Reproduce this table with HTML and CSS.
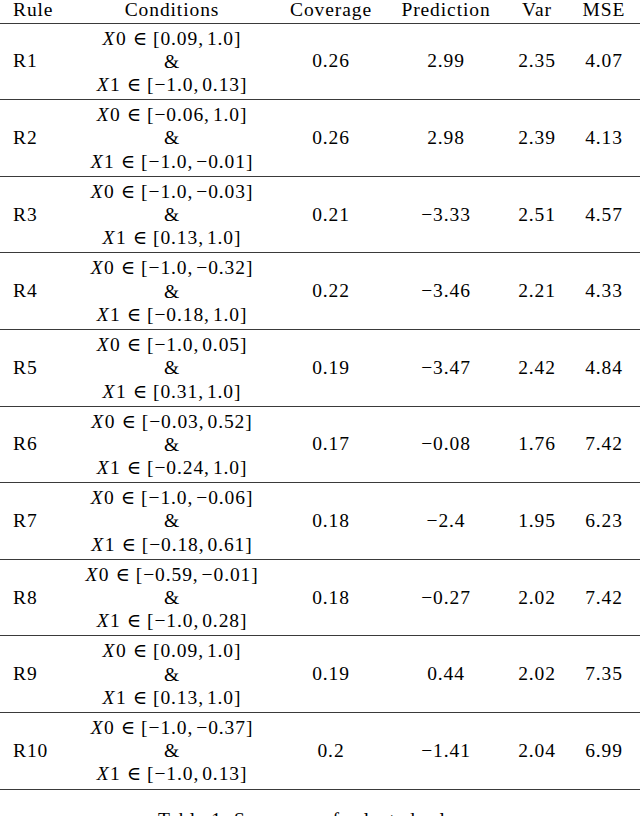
FILE: index.html
```html
<!DOCTYPE html>
<html>
<head>
<meta charset="utf-8">
<link rel="stylesheet" href="styles.css">
</head>
<body>
<table class="rules">
  <colgroup>
    <col class="c-rule"><col class="c-cond"><col class="c-cov"><col class="c-pred"><col class="c-var"><col class="c-mse">
  </colgroup>
  <thead>
    <tr><th class="rule">Rule</th><th>Conditions</th><th>Coverage</th><th>Prediction</th><th>Var</th><th>MSE</th></tr>
  </thead>
  <tbody>
    <tr><td class="rule">R1</td><td class="cond"><div class="ln"><i>X</i>0<span class="rel">∈</span>[0.09,<span class="sp"></span>1.0]</div><div class="ln">&amp;</div><div class="ln"><i>X</i>1<span class="rel">∈</span>[−1.0,<span class="sp"></span>0.13]</div></td><td>0.26</td><td>2.99</td><td>2.35</td><td>4.07</td></tr>
    <tr><td class="rule">R2</td><td class="cond"><div class="ln"><i>X</i>0<span class="rel">∈</span>[−0.06,<span class="sp"></span>1.0]</div><div class="ln">&amp;</div><div class="ln"><i>X</i>1<span class="rel">∈</span>[−1.0,<span class="sp"></span>−0.01]</div></td><td>0.26</td><td>2.98</td><td>2.39</td><td>4.13</td></tr>
    <tr><td class="rule">R3</td><td class="cond"><div class="ln"><i>X</i>0<span class="rel">∈</span>[−1.0,<span class="sp"></span>−0.03]</div><div class="ln">&amp;</div><div class="ln"><i>X</i>1<span class="rel">∈</span>[0.13,<span class="sp"></span>1.0]</div></td><td>0.21</td><td>−3.33</td><td>2.51</td><td>4.57</td></tr>
    <tr><td class="rule">R4</td><td class="cond"><div class="ln"><i>X</i>0<span class="rel">∈</span>[−1.0,<span class="sp"></span>−0.32]</div><div class="ln">&amp;</div><div class="ln"><i>X</i>1<span class="rel">∈</span>[−0.18,<span class="sp"></span>1.0]</div></td><td>0.22</td><td>−3.46</td><td>2.21</td><td>4.33</td></tr>
    <tr><td class="rule">R5</td><td class="cond"><div class="ln"><i>X</i>0<span class="rel">∈</span>[−1.0,<span class="sp"></span>0.05]</div><div class="ln">&amp;</div><div class="ln"><i>X</i>1<span class="rel">∈</span>[0.31,<span class="sp"></span>1.0]</div></td><td>0.19</td><td>−3.47</td><td>2.42</td><td>4.84</td></tr>
    <tr><td class="rule">R6</td><td class="cond"><div class="ln"><i>X</i>0<span class="rel">∈</span>[−0.03,<span class="sp"></span>0.52]</div><div class="ln">&amp;</div><div class="ln"><i>X</i>1<span class="rel">∈</span>[−0.24,<span class="sp"></span>1.0]</div></td><td>0.17</td><td>−0.08</td><td>1.76</td><td>7.42</td></tr>
    <tr><td class="rule">R7</td><td class="cond"><div class="ln"><i>X</i>0<span class="rel">∈</span>[−1.0,<span class="sp"></span>−0.06]</div><div class="ln">&amp;</div><div class="ln"><i>X</i>1<span class="rel">∈</span>[−0.18,<span class="sp"></span>0.61]</div></td><td>0.18</td><td>−2.4</td><td>1.95</td><td>6.23</td></tr>
    <tr><td class="rule">R8</td><td class="cond"><div class="ln"><i>X</i>0<span class="rel">∈</span>[−0.59,<span class="sp"></span>−0.01]</div><div class="ln">&amp;</div><div class="ln"><i>X</i>1<span class="rel">∈</span>[−1.0,<span class="sp"></span>0.28]</div></td><td>0.18</td><td>−0.27</td><td>2.02</td><td>7.42</td></tr>
    <tr><td class="rule">R9</td><td class="cond"><div class="ln"><i>X</i>0<span class="rel">∈</span>[0.09,<span class="sp"></span>1.0]</div><div class="ln">&amp;</div><div class="ln"><i>X</i>1<span class="rel">∈</span>[0.13,<span class="sp"></span>1.0]</div></td><td>0.19</td><td>0.44</td><td>2.02</td><td>7.35</td></tr>
    <tr><td class="rule">R10</td><td class="cond"><div class="ln"><i>X</i>0<span class="rel">∈</span>[−1.0,<span class="sp"></span>−0.37]</div><div class="ln">&amp;</div><div class="ln"><i>X</i>1<span class="rel">∈</span>[−1.0,<span class="sp"></span>0.13]</div></td><td>0.2</td><td>−1.41</td><td>2.04</td><td>6.99</td></tr>
  </tbody>
</table>
<p class="caption">Table 1: Summary of selected rules</p>
</body>
</html>
```

FILE: styles.css
```css
html, body {
  margin: 0;
  padding: 0;
  background: #ffffff;
  overflow: hidden;
}
body {
  width: 640px;
  height: 816px;
  font-family: "Liberation Serif", "DejaVu Serif", serif;
  font-size: 19.5px;
  letter-spacing: 0.9px;
  color: #000000;
}
.rules {
  width: 640px;
  table-layout: fixed;
  border-collapse: collapse;
  border-spacing: 0;
}
.c-rule { width: 68px; }
.c-cond { width: 208px; }
.c-cov { width: 110px; }
.c-pred { width: 120px; }
.c-var { width: 62px; }
.c-mse { width: 72px; }
th, td {
  padding: 0;
  text-align: center;
  vertical-align: middle;
  font-weight: normal;
  white-space: nowrap;
}
th {
  height: 22.7px;
  line-height: 19px;
  vertical-align: top;
}
thead tr { border-bottom: 1px solid #3a3a3a; }
tbody tr { border-bottom: 1px solid #3a3a3a; height: 76.6px; }
th.rule, td.rule {
  text-align: left;
  padding-left: 13px;
}
.cond .ln { line-height: 23.3px; }
.cond i { font-style: italic; letter-spacing: 1.5px; }
.rel { margin: 0 5px 0 6px; }
.sp { display: inline-block; width: 3px; }
.caption {
  margin: 18px 0 0;
  line-height: 24px;
  text-align: center;
  padding-right: 18px;
}
```
